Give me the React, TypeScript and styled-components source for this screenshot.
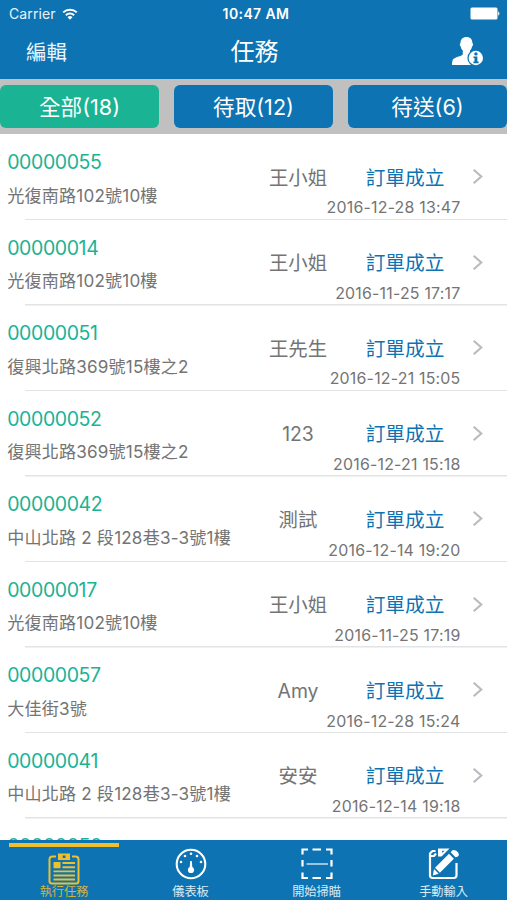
import React from "react";
import styled, { createGlobalStyle } from "styled-components";

const blue = "#0e73b2";
const green = "#1ab394";
const yellow = "#f0bf2c";

const GlobalStyle = createGlobalStyle`
  * { box-sizing: border-box; }
  body { margin: 0; background: #fff; }
`;

const Screen = styled.div`
  width: 507px;
  height: 900px;
  display: flex;
  flex-direction: column;
  overflow: hidden;
  background: #fff;
  font-family: Inter, "Noto Sans CJK TC", sans-serif;
`;

const StatusBar = styled.div`
  height: 27px;
  flex: none;
  display: grid;
  grid-template-columns: 1fr auto 1fr;
  align-items: center;
  padding: 1px 7px 0 9px;
  background: ${blue};
  color: #e6f3fb;
  font-size: 14px;
  line-height: 26px;
`;

const Carrier = styled.div`
  display: flex;
  align-items: center;
  gap: 6px;
  letter-spacing: 0.1px;
`;

const Clock = styled.div`
  color: #fff;
  font-weight: 600;
  font-size: 14px;
  letter-spacing: 0.4px;
  padding-left: 3px;
`;

const BatterySlot = styled.div`
  display: flex;
  justify-content: flex-end;
  margin-top: -2px;
`;

const NavBar = styled.header`
  height: 52px;
  flex: none;
  display: grid;
  grid-template-columns: 1fr auto 1fr;
  align-items: center;
  padding: 0 23px 2px 25px;
  background: ${blue};
  color: #fff;
`;

const EditButton = styled.button`
  justify-self: start;
  border: 0;
  padding: 2px 0 0 1px;
  background: none;
  color: #eaf6fd;
  font: inherit;
  font-size: 20.5px;
  line-height: 30px;
`;

const Title = styled.h1`
  margin: 0;
  font-size: 24px;
  font-weight: 400;
  line-height: 32px;
`;

const InfoSlot = styled.div`
  justify-self: end;
  height: 32px;
`;

const Filters = styled.div`
  height: 55px;
  flex: none;
  display: grid;
  grid-template-columns: repeat(3, 159px);
  justify-content: space-between;
  align-items: start;
  padding-top: 6px;
  background: #c0c0c0;
`;

const FilterButton = styled.button<{ $active?: boolean }>`
  height: 43px;
  border: 0;
  border-radius: 6px;
  padding: 1px 0 0;
  background: ${(p) => (p.$active ? green : blue)};
  color: #fff;
  font: inherit;
  font-size: 21.6px;
  line-height: 42px;
`;

const List = styled.main`
  flex: 1;
  min-height: 0;
  padding-top: 0.6px;
  overflow: hidden;
`;

const Row = styled.article`
  height: 85.55px;
  display: grid;
  grid-template-columns: 239px 118px 96px 1fr;
  grid-template-rows: 60px 25.55px;
  background: linear-gradient(#e2e3e4, #e2e3e4) 25px 100% / 100% 1.5px no-repeat;
`;

const Place = styled.div`
  grid-row: 1 / 3;
  padding: 14.5px 0 0 7.2px;
  white-space: nowrap;
`;

const OrderId = styled.div`
  color: ${green};
  font-size: 19.5px;
  line-height: 26px;
  letter-spacing: -0.4px;
`;

const Address = styled.div`
  margin-top: 8.5px;
  color: #747474;
  font-size: 17.1px;
  line-height: 24px;
  letter-spacing: 0.18px;
`;

const Person = styled.div`
  padding-top: 28px;
  text-align: center;
  color: #747474;
  font-size: 19.4px;
  line-height: 30px;
`;

const OrderState = styled.div`
  padding-top: 28px;
  text-align: center;
  color: ${blue};
  font-size: 19.7px;
  line-height: 30px;
`;

const Arrow = styled.div`
  padding: 33.5px 0 0 19px;
  line-height: 0;
`;

const Time = styled.time`
  grid-column: 2 / 5;
  justify-self: end;
  margin-right: 46.5px;
  padding-top: 3.8px;
  color: #747474;
  font-size: 15.9px;
  line-height: 20px;
  letter-spacing: 0.22px;
  white-space: nowrap;
`;

const TabBar = styled.nav`
  height: 60px;
  flex: none;
  display: grid;
  grid-template-columns: 128px 125px 127px 127px;
  background: ${blue};
`;

const Tab = styled.button<{ $active?: boolean }>`
  display: flex;
  flex-direction: column;
  align-items: center;
  border: 0;
  padding: 2.5px 0 0;
  background: none;
  color: ${(p) => (p.$active ? yellow : "#fff")};
  font: inherit;
  font-size: 12.2px;
  line-height: 18px;

  &::before {
    content: "";
    width: 110px;
    height: 4px;
    flex: none;
    background: ${(p) => (p.$active ? yellow : "transparent")};
  }
`;

const TabIcon = styled.svg`
  width: 34px;
  height: 34px;
  flex: none;
  overflow: visible;
`;

const TabLabel = styled.span`
  margin-top: 2px;
  opacity: 0.85;
`;

const WifiIcon = () => (
  <svg width="16" height="12" viewBox="0 0 16 12">
    <g fill="none" stroke="#fff" strokeWidth="2">
      <path d="M1.2 4.4a9.8 9.8 0 0 1 13.6 0" />
      <path d="M3.9 7.2a5.9 5.9 0 0 1 8.2 0" />
    </g>
    <path d="M8 11.8 5.5 9.2a3.6 3.6 0 0 1 5 0z" fill="#fff" />
  </svg>
);

const BatteryIcon = () => (
  <svg width="30" height="13" viewBox="0 0 30 13">
    <rect x="0.500" y="0.500" width="27" height="12" rx="1.500" fill="#fff" />
    <path d="M28.200 4.500c1.600.3 1.600 3.700 0 4z" fill="#fff" />
  </svg>
);

const PersonInfoIcon = () => (
  <svg width="32" height="30" viewBox="0 0 32 30">
    <path
      d="M14.500 1c3.800 0 5.900 2.300 5.900 6 1 .5.8 2.800-.3 3.500-.5 2-1.100 3.200-2.100 4.100v3.400c1.300 1.200 3.700 1.500 6 3V29H0c0-4.500.8-6.200 3.500-7.300 3-1.300 5.900-1.700 7.300-3.200v-3.900c-1-.9-1.700-2.100-2.100-4.100C7.600 9.800 7.500 7.500 8.500 7c0-3.700 2.200-6 6-6z"
      fill="#fff"
    />
    <circle cx="23.800" cy="22" r="8.400" fill={blue} />
    <circle cx="23.800" cy="22" r="7.200" fill="#fff" />
    <circle cx="23.900" cy="17.900" r="1.700" fill={blue} />
    <path d="M21.400 20.400h4v5.200h1.200v1.600h-5.200v-1.600h1.100v-3.600h-1.100z" fill={blue} />
  </svg>
);

const Chevron = () => (
  <svg width="12" height="17" viewBox="0 0 12 17">
    <path d="M1.700 1.700 9.300 8.500l-7.600 6.800" fill="none" stroke="#bababf" strokeWidth="2.100" />
  </svg>
);

const ClipboardIcon = () => (
  <TabIcon viewBox="0 0 34 34">
    <path
      d="M9 9.500H5.500a3 3 0 0 0-3 3V34a2.500 2.500 0 0 0 2.500 2.500h24a2.500 2.500 0 0 0 2.500-2.500V12.500a3 3 0 0 0-3-3H25"
      fill="none"
      stroke={yellow}
      strokeWidth="2"
    />
    <path fillRule="evenodd" d="M11 6.500h12v6.500H11zM15.700 8.500v2.500h2.800V8.500z" fill={yellow} />
    <path
      d="M6.500 15H13.500v6.200H6.500zM15.500 15H28v1.900H15.500zM15.500 19.300H28v1.900H15.500zM6.500 23.400H28v1.900H6.500zM6.500 27.500H28v1.900H6.500zM6.500 31.600H28v1.900H6.500z"
      fill={yellow}
    />
  </TabIcon>
);

const GaugeIcon = () => (
  <TabIcon viewBox="0 0 34 34">
    <circle cx="17" cy="17" r="14.300" fill="none" stroke="#fff" strokeWidth="2.100" />
    <g fill="#fff">
      <circle cx="7" cy="15" r="1.300" />
      <circle cx="11" cy="9" r="1.300" />
      <circle cx="17" cy="6.800" r="1.300" />
      <circle cx="23" cy="9" r="1.300" />
      <circle cx="27" cy="15" r="1.300" />
      <circle cx="17" cy="23" r="3.100" />
      <path d="M16.200 14h1.600l.7 8h-3z" />
    </g>
  </TabIcon>
);

const ScanIcon = () => (
  <TabIcon viewBox="0 0 34 34">
    <path
      d="M2.500 7.500V2.500H8M12.500 2.500h8.500M26 2.500h5.500v5M31.500 13v6.500M31.500 25.500v5.500H26M21 31h-8.500M8 31H2.500v-5.500M2.500 19.500V13"
      fill="none"
      stroke="#fff"
      strokeWidth="2.200"
    />
    <path d="M6.500 17H28" stroke="#d4e8f5" strokeWidth="1.400" />
  </TabIcon>
);

const EditIcon = () => (
  <TabIcon viewBox="0 0 34 34">
    <path
      d="M8.500 4H5.500L3 6.500v22A2.500 2.500 0 0 0 5.500 31h21.500a2.500 2.500 0 0 0 2.500-2.500V16M3 9h4l2-2.500"
      fill="none"
      stroke="#fff"
      strokeWidth="2.200"
    />
    <path fillRule="evenodd" d="M11 1.500H22.500L14.500 9.500H11zM15.200 3.700v2.300l2.400-2.300z" fill="#fff" />
    <path
      d="M22 6.800l4.900 4.900-14 14-4.900-4.900zM7 22l4.700 4.700L5.800 28.500zM23.600 5.200l1.900-1.900c1.800-1.800 8.800 2.700 5.500 6.200L28.500 10.200z"
      fill="#fff"
    />
  </TabIcon>
);

const orders = [
  { id: "00000055", address: "光復南路102號10樓", person: "王小姐", time: "2016-12-28 13:47" },
  { id: "00000014", address: "光復南路102號10樓", person: "王小姐", time: "2016-11-25 17:17" },
  { id: "00000051", address: "復興北路369號15樓之2", person: "王先生", time: "2016-12-21 15:05" },
  { id: "00000052", address: "復興北路369號15樓之2", person: "123", time: "2016-12-21 15:18" },
  { id: "00000042", address: "中山北路 2 段128巷3-3號1樓", person: "測試", time: "2016-12-14 19:20" },
  { id: "00000017", address: "光復南路102號10樓", person: "王小姐", time: "2016-11-25 17:19" },
  { id: "00000057", address: "大佳街3號", person: "Amy", time: "2016-12-28 15:24" },
  { id: "00000041", address: "中山北路 2 段128巷3-3號1樓", person: "安安", time: "2016-12-14 19:18" },
];

export default function App() {
  return (
    <>
      <GlobalStyle />
      <Screen>
        <StatusBar>
          <Carrier>
            Carrier <WifiIcon />
          </Carrier>
          <Clock>10:47 AM</Clock>
          <BatterySlot>
            <BatteryIcon />
          </BatterySlot>
        </StatusBar>
        <NavBar>
          <EditButton>編輯</EditButton>
          <Title>任務</Title>
          <InfoSlot>
            <PersonInfoIcon />
          </InfoSlot>
        </NavBar>
        <Filters>
          <FilterButton $active>全部(18)</FilterButton>
          <FilterButton>待取(12)</FilterButton>
          <FilterButton>待送(6)</FilterButton>
        </Filters>
        <List>
          {orders.map((o) => (
            <Row key={o.id}>
              <Place>
                <OrderId>{o.id}</OrderId>
                <Address>{o.address}</Address>
              </Place>
              <Person>{o.person}</Person>
              <OrderState>訂單成立</OrderState>
              <Arrow>
                <Chevron />
              </Arrow>
              <Time>{o.time}</Time>
            </Row>
          ))}
          <Row>
            <Place>
              <OrderId>00000050</OrderId>
            </Place>
          </Row>
        </List>
        <TabBar>
          <Tab $active>
            <ClipboardIcon />
            <TabLabel>執行任務</TabLabel>
          </Tab>
          <Tab>
            <GaugeIcon />
            <TabLabel>儀表板</TabLabel>
          </Tab>
          <Tab>
            <ScanIcon />
            <TabLabel>開始掃瞄</TabLabel>
          </Tab>
          <Tab>
            <EditIcon />
            <TabLabel>手動輸入</TabLabel>
          </Tab>
        </TabBar>
      </Screen>
    </>
  );
}
